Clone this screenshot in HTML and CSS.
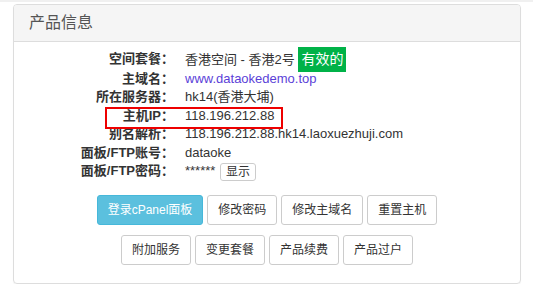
FILE: index.html
```html
<!DOCTYPE html>
<html lang="zh-CN">
<head>
<meta charset="utf-8">
<title>产品信息</title>
<link rel="stylesheet" href="styles.css">
</head>
<body>
<div class="topline"></div>
<div class="panel">
  <div class="panel-heading">产品信息</div>
  <div class="panel-body">
    <div class="info">
      <div class="row"><span class="lbl">空间套餐：</span><span class="val">香港空间 - 香港2号 <span class="badge">有效的</span></span></div>
      <div class="row"><span class="lbl">主域名：</span><span class="val"><a class="link" href="#">www.dataokedemo.top</a></span></div>
      <div class="row"><span class="lbl">所在服务器：</span><span class="val">hk14(香港大埔)</span></div>
      <div class="row marked"><span class="lbl">主机IP：</span><span class="val">118.196.212.88</span></div>
      <div class="row"><span class="lbl">别名解析：</span><span class="val">118.196.212.88.hk14.laoxuezhuji.com</span></div>
      <div class="row"><span class="lbl">面板/FTP账号：</span><span class="val">dataoke</span></div>
      <div class="row"><span class="lbl">面板/FTP密码：</span><span class="val">****** <button class="btn-xs" type="button">显示</button></span></div>
    </div>
    <div class="actions">
      <div class="btn-row">
        <button class="btn btn-info" type="button">登录cPanel面板</button>
        <button class="btn" type="button">修改密码</button>
        <button class="btn" type="button">修改主域名</button>
        <button class="btn" type="button">重置主机</button>
      </div>
      <div class="btn-row">
        <button class="btn" type="button">附加服务</button>
        <button class="btn" type="button">变更套餐</button>
        <button class="btn" type="button">产品续费</button>
        <button class="btn" type="button">产品过户</button>
      </div>
    </div>
  </div>
</div>
</body>
</html>
```

FILE: styles.css
```css
* { box-sizing: border-box; }
html, body {
  margin: 0;
  background: #fff;
  font-family: "Liberation Sans", "Noto Sans CJK SC", sans-serif;
  color: #333;
}
.topline {
  height: 2px;
  background: #f0f0f0;
  margin-bottom: 2px;
}
.panel {
  width: 508px;
  height: 280px;
  margin-left: 13px;
  border: 1px solid #ddd;
  border-radius: 4px;
  box-shadow: 0 1px 1px rgba(0,0,0,.05);
  overflow: hidden;
}
.panel-heading {
  height: 37px;
  background: #f5f5f5;
  border-bottom: 1px solid #ddd;
  padding-left: 15px;
  font-size: 16px;
  line-height: 36px;
  color: #555;
}
.panel-body {
  padding-top: 8px;
}
.info {
  font-size: 13px;
  line-height: 18.57px;
}
.row {
  display: grid;
  grid-template-columns: 160px 1fr;
  column-gap: 11px;
}
.lbl {
  text-align: right;
  font-weight: bold;
  color: #333;
}
.val {
  color: #333;
  white-space: nowrap;
}
.link {
  color: #5b3fd8;
  text-decoration: none;
}
.badge {
  background: #00b248;
  color: #fff;
  font-size: 14px;
  padding: 4px 3px 5px;
}
.marked {
  position: relative;
}
.marked::after {
  content: "";
  position: absolute;
  left: 91px;
  top: 0;
  width: 174px;
  height: 18px;
  border: 2px solid #e00;
}
.btn-xs {
  font-family: inherit;
  font-size: 12px;
  line-height: 16px;
  padding: 0 5px;
  margin-left: 1px;
  background: #fff;
  border: 1px solid #ccc;
  border-radius: 3px;
  color: #333;
  vertical-align: middle;
}
.actions {
  margin-top: 14px;
  display: flex;
  flex-direction: column;
  gap: 10px;
}
.btn-row {
  display: flex;
  justify-content: center;
  gap: 4px;
}
.btn {
  font-family: inherit;
  font-size: 12px;
  line-height: 18px;
  padding: 5px 10px;
  height: 30px;
  background: #fff;
  border: 1px solid #ccc;
  border-radius: 3px;
  color: #333;
}
.btn-info {
  background: #5bc0de;
  border-color: #46b8da;
  color: #fff;
}
```
